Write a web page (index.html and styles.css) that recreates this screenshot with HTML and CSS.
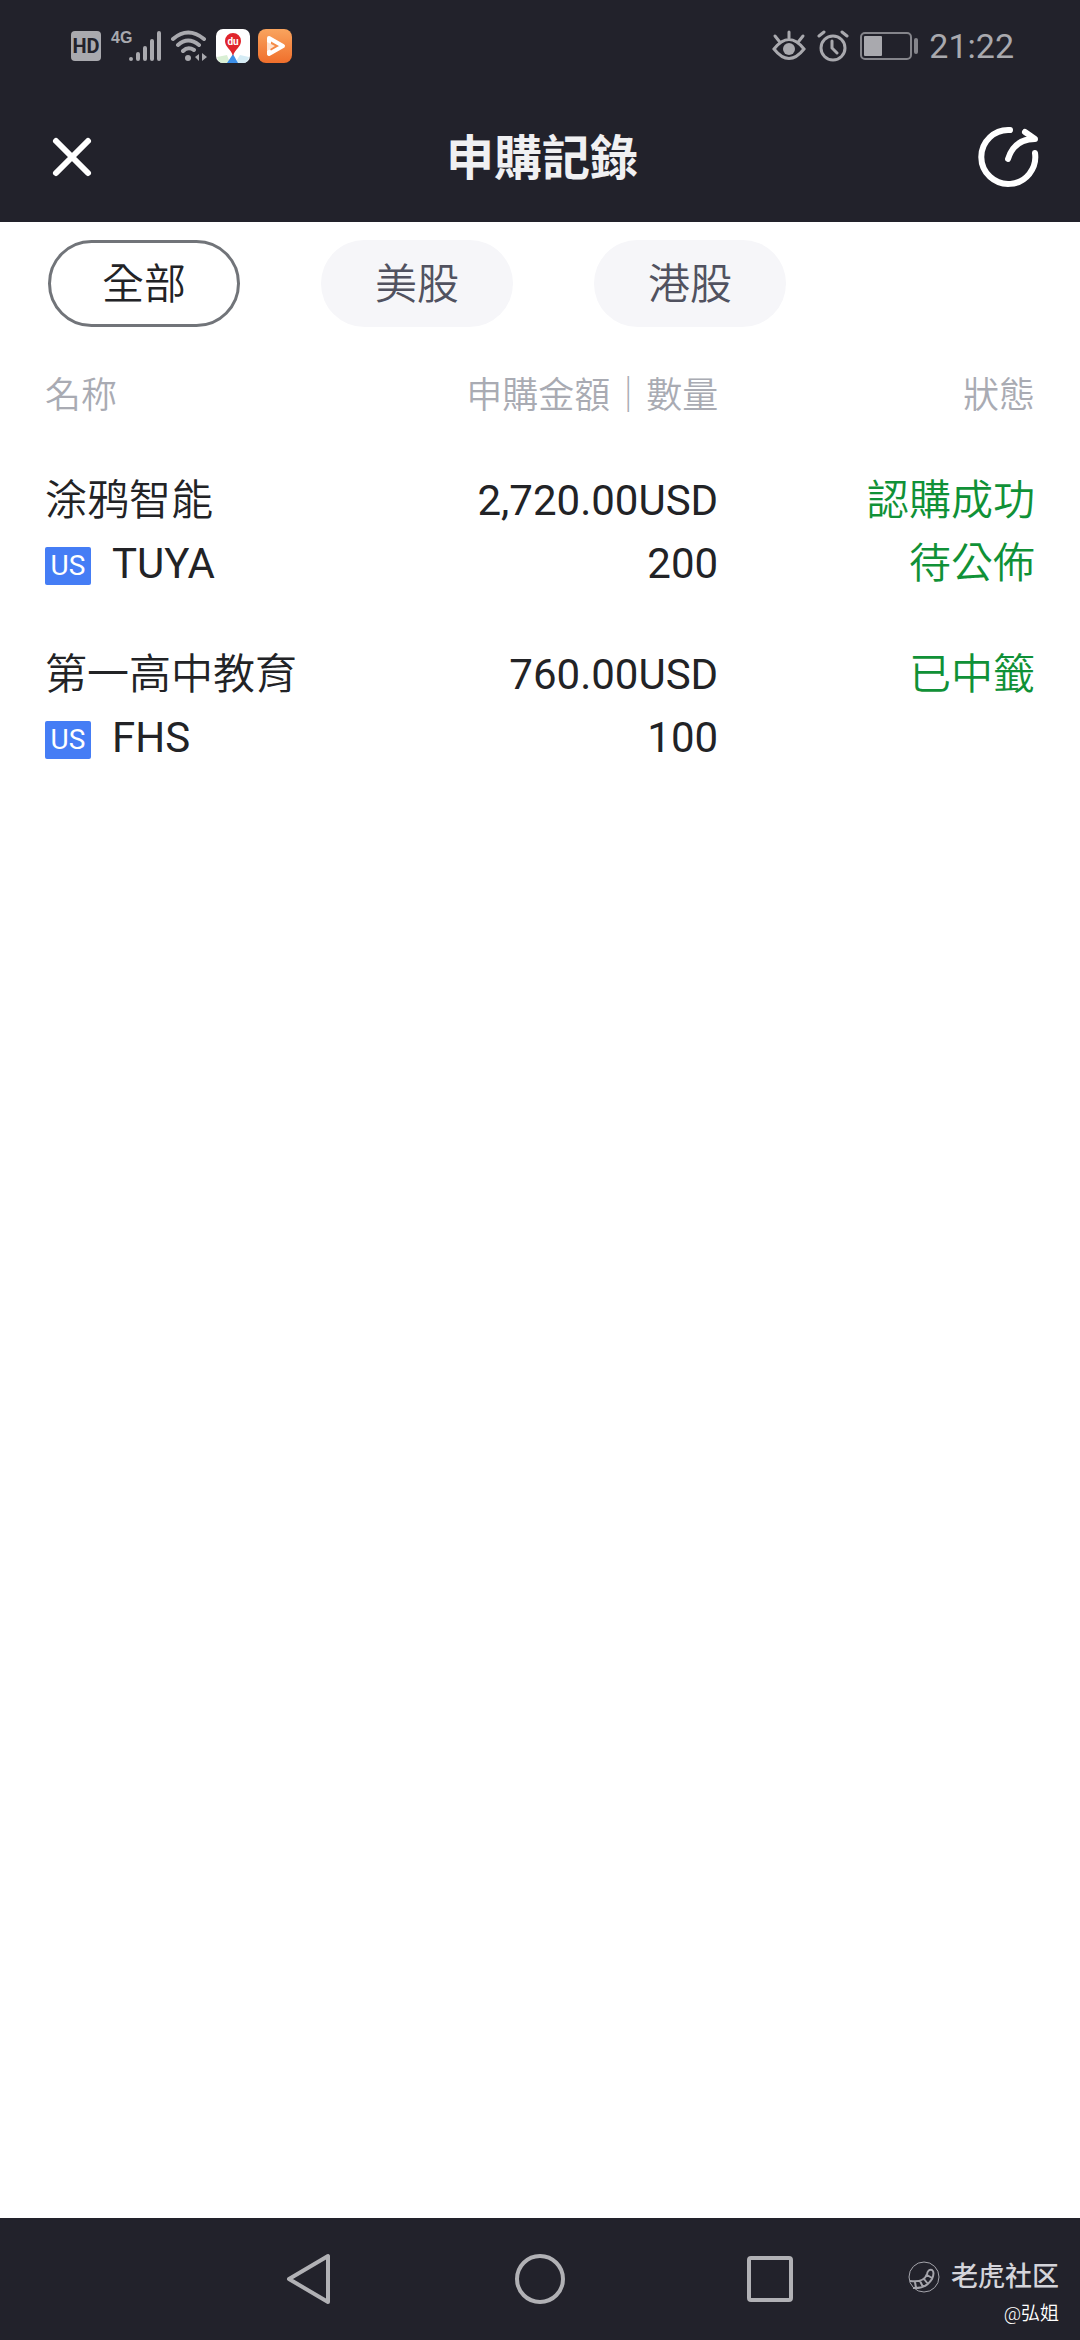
FILE: index.html
```html
<!DOCTYPE html>
<html lang="zh-Hant">
<head>
    <meta charset="UTF-8">
    <meta name="viewport" content="width=device-width, initial-scale=1.0">
    <title>申購記錄</title>
    <link rel="stylesheet" href="styles.css">
</head>
<body>
    <!-- 狀態列 -->
    <div class="status-bar">
        <div class="status-left">
            <span class="hd">HD</span>
            <div class="signal">
                <span class="network">4G</span>
                <svg width="33" height="32" viewBox="0 0 33 32" fill="none" stroke="#a9a9ae" stroke-width="4" stroke-linecap="round">
                    <path d="M2 29v0M9 24v5M16 18v11M23 11v18M30 3v26"/>
                </svg>
            </div>
            <svg width="38" height="32" viewBox="0 0 38 32" fill="none" stroke="#a9a9ae" stroke-width="4" stroke-linecap="round">
                <path d="M3 9Q18 -4 34 9M8 15Q18 6 29 15M13 21Q18 16 24 20"/>
                <circle cx="18" cy="28" r="3" fill="#a9a9ae" stroke="none"/>
                <path d="M29 24v7l-4-4zM32 23v8l5-4z" fill="#a9a9ae" stroke="none"/>
            </svg>
            <svg width="34" height="34" viewBox="0 0 34 34">
                <rect width="34" height="34" rx="7" fill="#fff"/>
                <path d="M1 28l10-2 3 8H7q-5 0-6-6z" fill="#d9efd4"/>
                <path d="M33 28l-9-2-5 8h8q5 0 6-6z" fill="#d5ecf5"/>
                <path d="M17 25l-6 9h11z" fill="#3c8fe8"/>
                <path d="M17 27C15 20 9 18 9 12a8 8 0 0 1 16 0c0 6-6 8-8 15z" fill="#e0242c"/>
                <text x="17" y="16" class="du">du</text>
            </svg>
            <svg width="34" height="34" viewBox="0 0 34 34">
                <defs>
                    <linearGradient id="orange" x1="0" y1="0" x2="0" y2="1">
                        <stop offset="0" stop-color="#f9a45e"/>
                        <stop offset="1" stop-color="#f06f2c"/>
                    </linearGradient>
                </defs>
                <rect width="34" height="34" rx="8" fill="url(#orange)"/>
                <path d="M11 14V9l14 8-14 8v-3" fill="none" stroke="#fff" stroke-width="4" stroke-linejoin="round" stroke-linecap="round"/>
                <path d="M9 13l8 4-8 5z" fill="#ffe3d0"/>
            </svg>
        </div>
        <div class="status-right">
            <svg width="34" height="32" viewBox="0 0 34 32" fill="none" stroke="#a9a9ae" stroke-width="3" stroke-linecap="round">
                <path d="M2 19Q17 0 32 19Q17 38 2 19zM17 2v6M3 6l4 5M31 6l-4 5"/>
                <circle cx="17" cy="19" r="6" fill="#a9a9ae" stroke="none"/>
            </svg>
            <svg width="32" height="32" viewBox="0 0 32 32" fill="none" stroke="#a9a9ae" stroke-width="3" stroke-linecap="round">
                <circle cx="16" cy="18" r="12"/>
                <path d="M15 11v7l5 5M2 6l5-4M30 6l-5-4"/>
            </svg>
            <svg width="58" height="28" viewBox="0 0 58 28">
                <rect x="1" y="1" width="50" height="26" rx="4" fill="none" stroke="#85858b" stroke-width="2"/>
                <rect x="4" y="4" width="18" height="20" rx="1" fill="#a9a9ae"/>
                <rect x="54" y="6" width="4" height="16" rx="2" fill="#85858b"/>
            </svg>
            <time class="clock">21:22</time>
        </div>
    </div>

    <header class="nav-header">
        <button class="icon-btn" aria-label="關閉">
            <svg width="48" height="48" viewBox="0 0 48 48" fill="none" stroke="#fff" stroke-width="6" stroke-linecap="round">
                <path d="M8 8l32 32M40 8L8 40"/>
            </svg>
        </button>
        <h1>申購記錄</h1>
        <button class="icon-btn share-btn" aria-label="分享">
            <svg width="64" height="64" viewBox="0 0 64 64" fill="none" stroke="#fff" stroke-width="6" stroke-linecap="round" stroke-linejoin="round">
                <path d="M34 5A27 27 0 1 0 59 28M32 34Q38 14 59 14L49 7"/>
            </svg>
        </button>
    </header>

    <main>
        <!-- 市場篩選 -->
        <div class="filters">
            <button class="filter active" aria-pressed="true">全部</button>
            <button class="filter" aria-pressed="false">美股</button>
            <button class="filter" aria-pressed="false">港股</button>
        </div>

        <!-- 申購列表 -->
        <table class="records">
            <thead>
                <tr>
                    <th class="col-name">名称</th>
                    <th class="col-amount">申購金額｜數量</th>
                    <th class="col-state">狀態</th>
                </tr>
            </thead>
            <tbody>
                <tr>
                    <td>
                        <div class="name">涂鸦智能</div>
                        <div class="symbol"><span class="market">US</span>TUYA</div>
                    </td>
                    <td>
                        <div>2,720.00USD</div>
                        <div>200</div>
                    </td>
                    <td class="state">
                        <div>認購成功</div>
                        <div>待公佈</div>
                    </td>
                </tr>
                <tr>
                    <td>
                        <div class="name">第一高中教育</div>
                        <div class="symbol"><span class="market">US</span>FHS</div>
                    </td>
                    <td>
                        <div>760.00USD</div>
                        <div>100</div>
                    </td>
                    <td class="state">
                        <div>已中籤</div>
                    </td>
                </tr>
            </tbody>
        </table>
    </main>

    <!-- 系統導航鍵 -->
    <footer class="system-nav">
        <button class="icon-btn" aria-label="返回">
            <svg width="52" height="52" viewBox="0 0 52 52" fill="none" stroke="#b1b1b5" stroke-width="4" stroke-linejoin="round">
                <path d="M44 3v46L5 26z"/>
            </svg>
        </button>
        <button class="icon-btn" aria-label="主畫面">
            <svg width="52" height="52" viewBox="0 0 52 52" fill="none" stroke="#b1b1b5" stroke-width="4">
                <circle cx="26" cy="26" r="23"/>
            </svg>
        </button>
        <button class="icon-btn" aria-label="最近任務">
            <svg width="52" height="52" viewBox="0 0 52 52" fill="none" stroke="#b1b1b5" stroke-width="4">
                <rect x="5" y="5" width="42" height="42" rx="2"/>
            </svg>
        </button>
        <div class="watermark">
            <div class="community">
                <svg width="32" height="32" viewBox="0 0 32 32" fill="none" stroke="#a5a5ac" stroke-width="1">
                    <circle cx="16" cy="16" r="15"/>
                    <path d="M2 20Q16 22 19 13Q20 8 24 9Q27 11 24 18Q18 28 5 27M19 14l5 3M16 18l4 5M12 20l3 6M7 21l1 6" stroke-width="2"/>
                </svg>
                <span>老虎社区</span>
            </div>
            <div class="author">@弘姐</div>
        </div>
    </footer>
</body>
</html>
```

FILE: styles.css
```css
* {
    box-sizing: border-box;
}

body {
    margin: 0;
    min-height: 100vh;
    display: flex;
    flex-direction: column;
    background-color: #fff;
    color: #222326;
    font-family: Roboto, "Noto Sans CJK SC", sans-serif;
    font-size: 42px;
}

button {
    padding: 0;
    border: none;
    background: none;
    font: inherit;
    color: inherit;
}

svg {
    display: block;
    flex: none;
}

/* 狀態列 */
.status-bar {
    display: flex;
    justify-content: space-between;
    align-items: center;
    height: 92px;
    padding: 0 66px 0 71px;
    background-color: #22222b;
    color: #a9a9ae;
}

.status-left {
    display: flex;
    align-items: center;
    gap: 8px;
}

.status-right {
    display: flex;
    align-items: center;
    gap: 11px;
}

.hd {
    width: 30px;
    height: 30px;
    border-radius: 4px;
    background-color: #a9a9ae;
    color: #22222b;
    font-size: 20px;
    font-weight: 700;
    line-height: 30px;
    text-align: center;
}

.signal {
    display: flex;
    align-items: flex-start;
    padding-left: 2px;
}

.network {
    width: 18px;
    font-family: "Liberation Sans Narrow", "Liberation Sans", sans-serif;
    font-size: 16px;
    font-weight: 700;
    line-height: 16px;
}

.du {
    fill: #fff;
    font-size: 10px;
    font-weight: 700;
    text-anchor: middle;
}

.clock {
    font-size: 34px;
    line-height: 40px;
}

/* 標題列 */
.nav-header {
    display: grid;
    grid-template-columns: 1fr auto 1fr;
    align-items: center;
    height: 130px;
    padding: 0 40px 0 48px;
    background-color: #22222b;
    color: #f0f0f2;
}

.nav-header h1 {
    margin: 0;
    padding: 4px 4px 0 0;
    font-size: 48px;
    font-weight: 700;
    line-height: 64px;
}

.share-btn {
    justify-self: end;
}

.nav-header .icon-btn:first-child {
    justify-self: start;
}

/* 內容 */
main {
    flex: 1;
    padding: 18px 45px 0;
}

.filters {
    display: flex;
    gap: 81px;
    padding: 0 3px;
}

.filter {
    width: 192px;
    height: 87px;
    padding-bottom: 6px;
    border-radius: 44px;
    background-color: #f6f6f9;
    color: #515260;
    font-weight: 350;
}

.filter.active {
    border: 3px solid #717479;
    background-color: #fff;
    color: #222326;
}

.records {
    width: 100%;
    margin-top: 42px;
    border-collapse: collapse;
    table-layout: fixed;
    line-height: 63px;
}

.records th {
    padding: 0 0 22px;
    color: #a9abb3;
    font-size: 36px;
    font-weight: 350;
    line-height: 54px;
    text-align: right;
}

.records td {
    padding: 24px 0;
    text-align: right;
    vertical-align: top;
}

.records th:first-child,
.records td:first-child {
    text-align: left;
}

.col-name,
.col-amount {
    width: 34%;
}

/* 中文字用較細的字重 */
.name,
.state {
    font-weight: 350;
}

.records .state {
    color: #109137;
}

.symbol {
    display: flex;
    align-items: center;
    gap: 21px;
}

.market {
    width: 46px;
    height: 38px;
    margin-top: 4px;
    border-radius: 2px;
    background-color: #457df5;
    color: #fff;
    font-size: 28px;
    line-height: 38px;
    text-align: center;
}

/* 底部導航 */
.system-nav {
    position: relative;
    display: flex;
    justify-content: center;
    align-items: center;
    gap: 178px;
    height: 122px;
    background-color: #22222b;
}

/* 浮水印 */
.watermark {
    position: absolute;
    right: 21px;
    bottom: 11px;
    color: #d4d4da;
    text-align: right;
}

.community {
    display: flex;
    align-items: center;
    gap: 11px;
    font-size: 27px;
    font-weight: 500;
    line-height: 44px;
}

.author {
    color: #fff;
    font-size: 19px;
    font-weight: 350;
    line-height: 30px;
}
```
